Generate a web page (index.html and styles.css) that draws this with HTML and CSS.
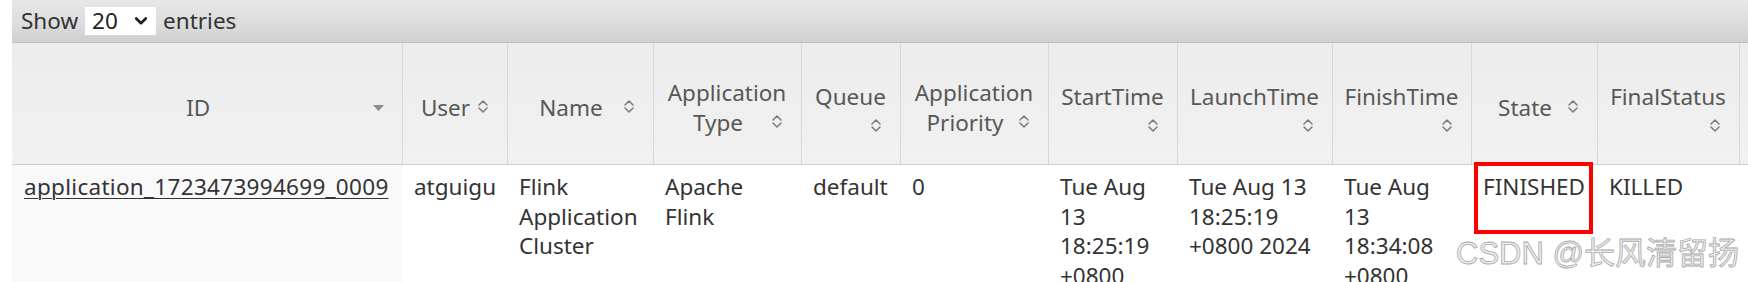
FILE: index.html
```html
<!DOCTYPE html>
<html lang="en">
<head>
<meta charset="utf-8">
<title>Applications</title>
<link rel="stylesheet" href="styles.css">
</head>
<body>
<div class="page">
  <div class="toolbar">
    <span class="lbl">Show</span>
    <span class="sel"><span class="sel-val">20</span><svg class="sel-chev" width="12" height="8" viewBox="0 0 12 8"><path d="M1.2 1.5 L6 6.2 L10.8 1.5" /></svg></span>
    <span class="lbl">entries</span>
  </div>
  <table class="apps">
    <colgroup>
      <col class="w-id"><col class="w-user"><col class="w-name"><col class="w-type"><col class="w-queue"><col class="w-prio"><col class="w-start"><col class="w-launch"><col class="w-finish"><col class="w-state"><col class="w-final"><col class="w-next">
    </colgroup>
    <thead>
      <tr>
        <th>ID<svg class="tri" width="11" height="6" viewBox="0 0 11 6"><polygon points="0,0 11,0 5.5,6"/></svg></th>
        <th>User<svg class="sort" width="12" height="15" viewBox="0 0 12 15"><path d="M2 6 L6 2 L10 6 M2 9 L6 13 L10 9"/></svg></th>
        <th>Name<svg class="sort" width="12" height="15" viewBox="0 0 12 15"><path d="M2 6 L6 2 L10 6 M2 9 L6 13 L10 9"/></svg></th>
        <th>Application Type<svg class="sort" width="12" height="15" viewBox="0 0 12 15"><path d="M2 6 L6 2 L10 6 M2 9 L6 13 L10 9"/></svg></th>
        <th>Queue<svg class="sort" width="12" height="15" viewBox="0 0 12 15"><path d="M2 6 L6 2 L10 6 M2 9 L6 13 L10 9"/></svg></th>
        <th>Application Priority<svg class="sort" width="12" height="15" viewBox="0 0 12 15"><path d="M2 6 L6 2 L10 6 M2 9 L6 13 L10 9"/></svg></th>
        <th>StartTime<svg class="sort" width="12" height="15" viewBox="0 0 12 15"><path d="M2 6 L6 2 L10 6 M2 9 L6 13 L10 9"/></svg></th>
        <th>LaunchTime<svg class="sort" width="12" height="15" viewBox="0 0 12 15"><path d="M2 6 L6 2 L10 6 M2 9 L6 13 L10 9"/></svg></th>
        <th>FinishTime<svg class="sort" width="12" height="15" viewBox="0 0 12 15"><path d="M2 6 L6 2 L10 6 M2 9 L6 13 L10 9"/></svg></th>
        <th>State<svg class="sort" width="12" height="15" viewBox="0 0 12 15"><path d="M2 6 L6 2 L10 6 M2 9 L6 13 L10 9"/></svg></th>
        <th>FinalStatus<svg class="sort" width="12" height="15" viewBox="0 0 12 15"><path d="M2 6 L6 2 L10 6 M2 9 L6 13 L10 9"/></svg></th>
        <th>Running Containers<svg class="sort" width="12" height="15" viewBox="0 0 12 15"><path d="M2 6 L6 2 L10 6 M2 9 L6 13 L10 9"/></svg></th>
      </tr>
    </thead>
    <tbody>
      <tr>
        <td class="sorted"><a class="app-link" href="#">application_1723473994699_0009</a></td>
        <td>atguigu</td>
        <td>Flink Application Cluster</td>
        <td>Apache Flink</td>
        <td>default</td>
        <td>0</td>
        <td>Tue Aug 13 18:25:19 +0800 2024</td>
        <td>Tue Aug 13 18:25:19 +0800 2024</td>
        <td>Tue Aug 13 18:34:08 +0800 2024</td>
        <td>FINISHED</td>
        <td>KILLED</td>
        <td>N/A</td>
      </tr>
    </tbody>
  </table>
  <div class="mark-box"></div>
  <div class="watermark">CSDN @长风清留扬</div>
</div>
</body>
</html>
```

FILE: styles.css
```css
html, body {
  margin: 0;
  padding: 0;
  overflow: hidden;
  background: #ffffff;
}

.page {
  position: relative;
  width: 1748px;
  height: 282px;
  overflow: hidden;
  font-family: "Noto Sans", "Open Sans", sans-serif;
  font-size: 22.5px;
  line-height: 29.5px;
  color: #333333;
}

.toolbar {
  margin-left: 12px;
  width: 1760px;
  height: 42px;
  display: flex;
  align-items: center;
  gap: 7px;
  padding-left: 9px;
  background: linear-gradient(#e7e7e7 0%, #dcdcdc 60%, #cfcfcf 100%);
  border-bottom: 1px solid #c2c2c2;
  color: #333333;
}

.sel {
  display: flex;
  align-items: center;
  justify-content: space-between;
  width: 71px;
  height: 28px;
  box-sizing: border-box;
  padding: 0 9px 0 7px;
  background: #ffffff;
  color: #222222;
}

.sel-chev path {
  fill: none;
  stroke: #1e1e1e;
  stroke-width: 2.6;
  stroke-linecap: round;
  stroke-linejoin: round;
}

.apps {
  margin-left: 12px;
  table-layout: fixed;
  border-collapse: collapse;
  width: 1927px;
}

.w-id { width: 390px; }
.w-user { width: 105px; }
.w-name { width: 146px; }
.w-type { width: 148px; }
.w-queue { width: 99px; }
.w-prio { width: 148px; }
.w-start { width: 129px; }
.w-launch { width: 155px; }
.w-finish { width: 139px; }
.w-state { width: 126px; }
.w-final { width: 142px; }
.w-next { width: 200px; }

.apps th {
  height: 113px;
  padding: 8px 12px 0 12px;
  background: linear-gradient(#ececec, #f1f1f1);
  border-left: 1px solid #d8d8d8;
  border-bottom: 1px solid #cfcfcf;
  color: #575757;
  font-weight: normal;
  text-align: center;
  vertical-align: middle;
}

.apps th:first-child {
  border-left: none;
}

.sort {
  float: right;
  margin: 6px 6px 0 0;
}

.sort path {
  fill: none;
  stroke: #7a7a7a;
  stroke-width: 1.5;
  stroke-linecap: round;
  stroke-linejoin: round;
}

.tri {
  float: right;
  margin: 12px 6px 0 0;
}

.tri polygon {
  fill: #8c8c8c;
}

.apps td {
  padding: 7px 12px 0 12px;
  vertical-align: top;
  text-align: left;
  background: #ffffff;
  color: #333333;
}

.apps td.sorted {
  background: #f9f9f9;
}

.app-link {
  color: #333333;
  text-decoration: underline;
  text-underline-offset: 3px;
  text-decoration-thickness: 1px;
  letter-spacing: 0.3px;
}

.mark-box {
  position: absolute;
  left: 1474px;
  top: 162px;
  width: 119px;
  height: 72px;
  box-sizing: border-box;
  border: 4px solid #ff0000;
}

.watermark {
  position: absolute;
  left: 1456px;
  top: 235px;
  font-family: "Liberation Sans", "Noto Sans CJK SC", sans-serif;
  font-size: 31px;
  line-height: 38px;
  white-space: nowrap;
  color: #eeeeee;
  -webkit-text-stroke: 0.8px #a9a9a9;
}
```
